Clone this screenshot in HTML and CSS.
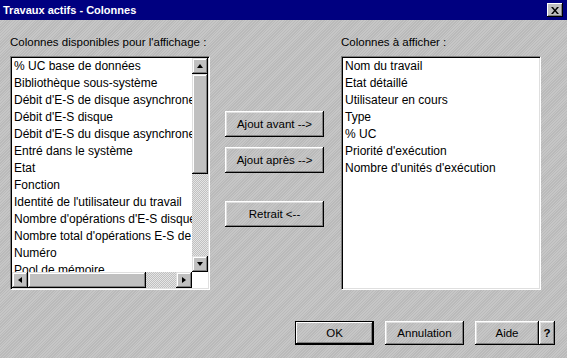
FILE: index.html
```html
<!DOCTYPE html>
<html lang="fr">
<head>
  <meta charset="UTF-8" />
  <title>Travaux actifs - Colonnes</title>
  <link rel="stylesheet" href="styles.css">
</head>
<body>
  <div class="window">
    <div class="titlebar">
      <span class="title">Travaux actifs - Colonnes</span>
      <button class="close">
        <svg width="8" height="7" viewBox="0 0 8 7"><path d="M0 0h2l2 2.5L6 0h2L5 3.5 8 7H6L4 4.5 2 7H0l3-3.5z" fill="#000"/></svg>
      </button>
    </div>

    <div class="content">
      <div class="columns">
        <div class="col">
          <div class="label">Colonnes disponibles pour l'affichage :</div>
          <div class="listbox scrolled">
            <ul class="items">
              <li>% UC base de données</li>
              <li>Bibliothèque sous-système</li>
              <li>Débit d'E-S de disque asynchrone</li>
              <li>Débit d'E-S disque</li>
              <li>Débit d'E-S du disque asynchrone</li>
              <li>Entré dans le système</li>
              <li>Etat</li>
              <li>Fonction</li>
              <li>Identité de l'utilisateur du travail</li>
              <li>Nombre d'opérations d'E-S disque</li>
              <li>Nombre total d'opérations E-S de disque</li>
              <li>Numéro</li>
              <li>Pool de mémoire</li>
            </ul>
            <div class="vscroll">
              <div class="arrow"><span class="tri up"></span></div>
              <div class="thumb"></div>
              <div class="track"></div>
              <div class="arrow"><span class="tri down"></span></div>
            </div>
            <div class="hscroll">
              <div class="arrow"><span class="tri left"></span></div>
              <div class="thumb"></div>
              <div class="track"></div>
              <div class="arrow"><span class="tri right"></span></div>
            </div>
            <div class="corner"></div>
          </div>
        </div>

        <div class="actions">
          <button class="btn">Ajout avant --&gt;</button>
          <button class="btn">Ajout après --&gt;</button>
          <button class="btn remove">Retrait &lt;--</button>
        </div>

        <div class="col">
          <div class="label">Colonnes à afficher :</div>
          <div class="listbox">
            <ul class="items">
              <li>Nom du travail</li>
              <li>Etat détaillé</li>
              <li>Utilisateur en cours</li>
              <li>Type</li>
              <li>% UC</li>
              <li>Priorité d'exécution</li>
              <li>Nombre d'unités d'exécution</li>
            </ul>
          </div>
        </div>
      </div>

      <div class="footer">
        <button class="btn default">OK</button>
        <button class="btn">Annulation</button>
        <button class="btn help">Aide</button>
        <button class="btn question">?</button>
      </div>
    </div>
  </div>
</body>
</html>
```

FILE: styles.css
```css
* {
  box-sizing: border-box;
}

body {
  margin: 0;
  font-family: 'Liberation Sans', Arial, sans-serif;
  font-size: 11.5px;
  color: #000;
}

.window {
  width: 567px;
  height: 358px;
  background: repeating-linear-gradient(135deg, #c6c6c6 0 1px, #bababa 1px 2px);
  overflow: hidden;
}

.titlebar {
  height: 20px;
  background: #000080;
  display: flex;
  align-items: center;
  justify-content: space-between;
  padding: 0 4px 0 3px;
}

.title {
  color: #fff;
  font-weight: bold;
  font-size: 11px;
}

.close {
  width: 16px;
  height: 14px;
  padding: 0;
  border: none;
  background: #c0c0c0;
  display: flex;
  align-items: center;
  justify-content: center;
  box-shadow: inset -1px -1px #000, inset 1px 1px #fff, inset -2px -2px #808080;
}

.content {
  padding: 14px 0 0 10px;
}

.columns {
  display: flex;
}

.col {
  width: 200px;
}

.label {
  height: 22px;
  line-height: 16px;
}

.listbox {
  height: 234px;
  background: #fff;
  border-top: 1px solid #808080;
  border-left: 1px solid #808080;
  border-right: 1px solid #fff;
  border-bottom: 1px solid #fff;
  box-shadow: inset 1px 1px #000, inset -1px -1px #dfdfdf;
  padding: 1px;
  overflow: hidden;
}

.listbox.scrolled {
  display: grid;
  grid-template-columns: 1fr 16px;
  grid-template-rows: 1fr 16px;
}

.items {
  list-style: none;
  margin: 0;
  padding: 0 0 0 2px;
  overflow: hidden;
  white-space: nowrap;
  font-size: 12px;
}

.items li {
  height: 17px;
  line-height: 17px;
}

.vscroll,
.hscroll {
  display: flex;
}

.vscroll {
  flex-direction: column;
}

.vscroll .thumb {
  height: 100px;
}

.hscroll .thumb {
  width: 118px;
}

.arrow,
.thumb {
  flex: none;
  background: #c0c0c0;
  box-shadow: inset -1px -1px #000, inset 1px 1px #dfdfdf, inset -2px -2px #808080, inset 2px 2px #fff;
}

.arrow {
  width: 16px;
  height: 16px;
  display: flex;
  align-items: center;
  justify-content: center;
}

.track {
  flex: 1;
  background: repeating-conic-gradient(#c0c0c0 0 25%, #e4e4e4 0 50%) 0 0 / 2px 2px;
}

.tri {
  width: 0;
  height: 0;
  border: 0 solid transparent;
}

.tri.up {
  border-width: 0 3px 4px;
  border-bottom-color: #000;
}

.tri.down {
  border-width: 4px 3px 0;
  border-top-color: #000;
}

.tri.left {
  border-width: 3px 4px 3px 0;
  border-right-color: #000;
}

.tri.right {
  border-width: 3px 0 3px 4px;
  border-left-color: #000;
}

.corner {
  background: #fff;
}

.actions {
  width: 99px;
  margin: 0 17px 0 15px;
  padding-top: 77px;
  display: flex;
  flex-direction: column;
}

.btn {
  height: 26px;
  padding: 0;
  border: none;
  font-family: inherit;
  font-size: 11.5px;
  color: #000;
  background: repeating-linear-gradient(135deg, #c6c6c6 0 1px, #bababa 1px 2px);
  box-shadow: inset -1px -1px #000, inset 1px 1px #fff, inset -2px -2px #808080, inset 2px 2px #dfdfdf;
}

.actions .btn + .btn {
  margin-top: 10px;
}

.actions .btn.remove {
  margin-top: 28px;
}

.footer {
  display: flex;
  justify-content: flex-end;
  padding-right: 12px;
  margin-top: 31px;
}

.footer .btn {
  height: 24px;
  width: 79px;
  margin-left: 11px;
}

.footer .btn.default {
  outline: 1px solid #000;
  outline-offset: -1px;
  box-shadow: inset -2px -2px #000, inset 2px 2px #fff, inset -3px -3px #808080;
}

.footer .btn.help {
  width: 64px;
}

.footer .btn.question {
  width: 16px;
  margin-left: 0;
  font-weight: bold;
}
```
